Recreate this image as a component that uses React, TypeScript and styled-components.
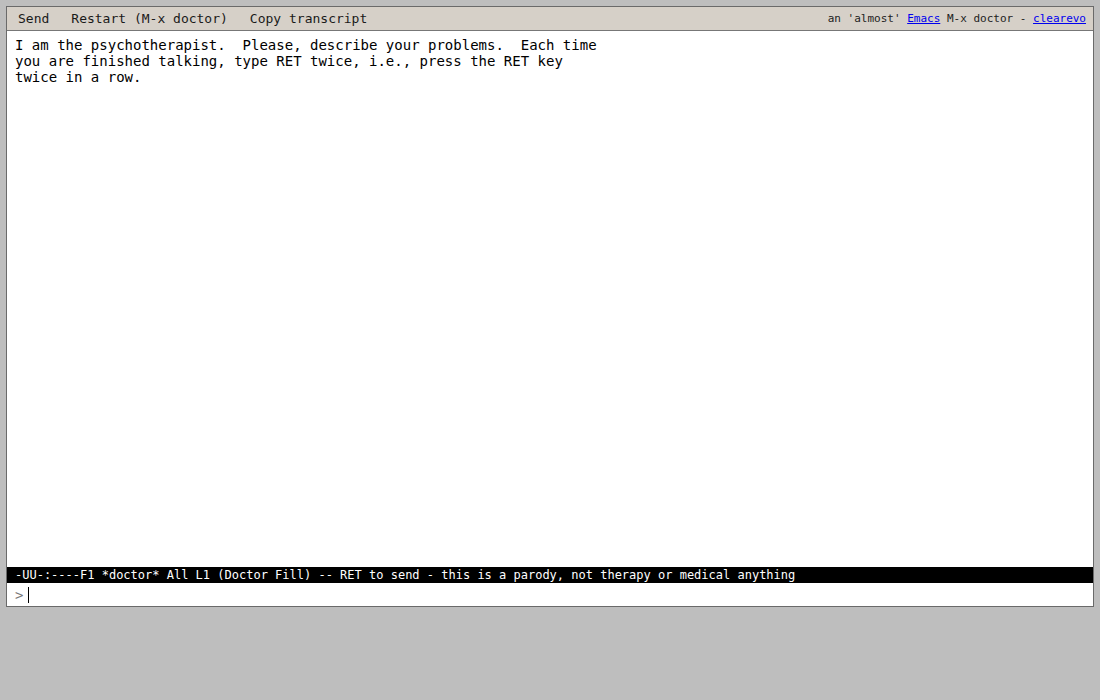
import styled, { createGlobalStyle } from 'styled-components'

const mono = `"DejaVu Sans Mono", "Liberation Mono", monospace`

const GlobalStyle = createGlobalStyle`
    html, body {
        margin: 0;
        padding: 0;
        background: #bebebe;
        font-family: ${mono};
    }
`

const greeting = [
    'I am the psychotherapist.  Please, describe your problems.  Each time',
    'you are finished talking, type RET twice, i.e., press the RET key',
    'twice in a row.',
]

const modeLine =
    '-UU-:----F1 *doctor* All L1 (Doctor Fill) -- RET to send - this is a parody, not therapy or medical anything'

const App = () => {
    return (
        <>
            <GlobalStyle />
            <Page>
                <Frame>
                    <Toolbar>
                        <ToolButton>Send</ToolButton>
                        <ToolButton>Restart (M-x doctor)</ToolButton>
                        <ToolButton>Copy transcript</ToolButton>
                        <Credit>
                            an 'almost' <CreditLink href="#">Emacs</CreditLink> M-x doctor -{' '}
                            <CreditLink href="#">clearevo</CreditLink>
                        </Credit>
                    </Toolbar>
                    <Buffer>{greeting.join('\n')}</Buffer>
                    <ModeLine>{modeLine}</ModeLine>
                    <InputLine>
                        <Prompt>&gt;</Prompt>
                        <Caret />
                    </InputLine>
                </Frame>
            </Page>
        </>
    )
}

const Page = styled.div`
    padding: 6px;
`

const Frame = styled.div`
    display: flex;
    flex-direction: column;
    height: 599px;
    border: 1px solid #6a6a6a;
    background: #fff;
`

const Toolbar = styled.div`
    display: flex;
    align-items: center;
    height: 23px;
    padding: 0 7px 0 0;
    background: #d6d0c8;
    border-bottom: 1px solid #777;
`

const ToolButton = styled.button`
    border: none;
    background: none;
    padding: 0 11px;
    margin: 0;
    font-family: ${mono};
    font-size: 13px;
    color: #1a1a1a;
    cursor: pointer;
`

const Credit = styled.div`
    margin-left: auto;
    font-size: 11px;
    color: #222;
    white-space: pre;
`

const CreditLink = styled.a`
    color: #0000ee;
    text-decoration: underline;
`

const Buffer = styled.div`
    flex: 1;
    padding: 6px 8px 2px;
    font-size: 14px;
    line-height: 16px;
    color: #000;
    white-space: pre;
`

const ModeLine = styled.div`
    height: 16px;
    padding: 0 8px;
    background: #000;
    color: #fff;
    font-size: 12px;
    line-height: 16px;
    white-space: pre;
`

const InputLine = styled.div`
    display: flex;
    align-items: center;
    height: 23px;
    padding: 0 8px;
`

const Prompt = styled.span`
    font-size: 14px;
    color: #777;
    margin-right: 5px;
`

const Caret = styled.span`
    display: inline-block;
    width: 1px;
    height: 16px;
    background: #000;
`

export default App
